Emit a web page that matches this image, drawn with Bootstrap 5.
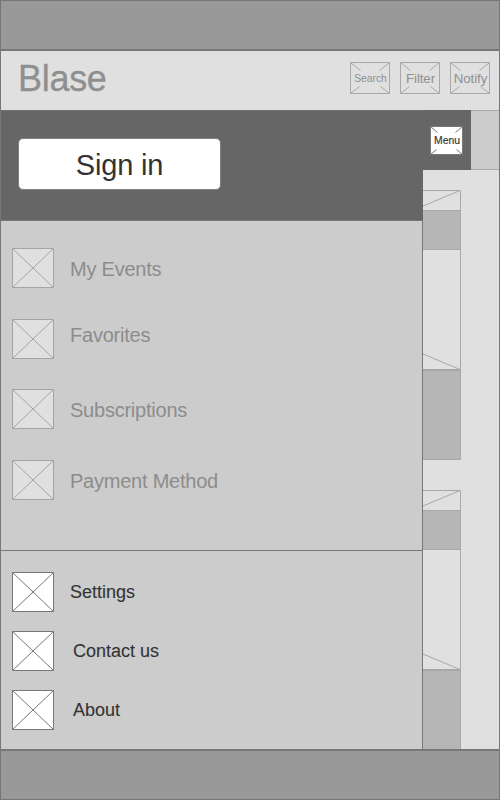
<!DOCTYPE html>
<html lang="en">
<head>
<meta charset="utf-8">
<meta name="viewport" content="width=device-width, initial-scale=1">
<title>Blase</title>
<link href="https://cdn.jsdelivr.net/npm/bootstrap@5.3.0/dist/css/bootstrap.min.css" rel="stylesheet">
<style>
body { font-family: "Liberation Sans", Arial, sans-serif; line-height: 1; color: #333; }
svg { display: block; fill: none; flex: none; }
.screen { width: 500px; height: 800px; background: #e0e0e0; }
.frame { inset: 0; border: 1px solid #777; pointer-events: none; }
.bar-top { height: 51px; background: #999; border-bottom: 2px solid #777; }
.bar-bottom { height: 51px; background: #999; border-top: 2px solid #777; }
.app-head { height: 59px; padding: 0 10px 5px 18px; color: #8f8f8f; }
.brand { font-size: 36px; letter-spacing: -.3px; padding-top: 1px; -webkit-text-stroke: .3px #8f8f8f; }
.tools { gap: 10px; }
.tool { width: 40px; height: 32px; font-size: 13.3px; line-height: 14px; letter-spacing: -.1px; padding-left: 1px; }
.tool.small-label { font-size: 10.3px; letter-spacing: 0; }
.tool svg, .menu-btn svg { inset: 0; }
.tool span { position: relative; white-space: nowrap; top: 1px; }
.drawer { width: 423px; background: #ccc; }
.drawer-head { height: 110px; background: #666; padding: 27px 0 0 18px; border-top: 1px solid #707070; }
.sign-in { width: 203px; height: 52px; background: #fff; border: 1px solid #808080; border-radius: 5px; font-size: 29px; line-height: 1; color: #333; padding: 3px 0 0; letter-spacing: -.2px; }
.drawer-body { border-top: 1px solid #777; border-right: 1px solid #777; padding-left: 12px; }
.guest { height: 330px; padding-top: 27px; color: #8c8c8c; font-size: 20px; letter-spacing: -.23px; border-bottom: 1px solid #777; margin-left: -12px; padding-left: 12px; }
.entry { height: 40px; gap: 16px; margin-bottom: 30px; }
.entry.wide { margin-bottom: 31px; }
.entry span { padding-top: 2px; }
.entry.raised span { padding-top: 0; padding-bottom: 8px; }
.entry svg { background: #e0e0e0; stroke: #a4a4a4; }
.general { padding-top: 21px; font-size: 18px; -webkit-text-stroke: .1px #333; }
.general .entry { margin-bottom: 19px; }
.general .entry span { padding-top: 0; }
.general .entry svg { background: #fff; stroke: #777; }
.general .shifted { gap: 19px; }
.tab-row { height: 60px; }
.tab-cell { width: 48px; background: #666; padding: 16px 0 0 7px; }
.tab-rest { background: #ccc; border-top: 1px solid #aaa; border-bottom: 1px solid #aaa; }
.menu-btn { width: 33px; height: 29px; font-size: 10.4px; }
.menu-btn span { position: relative; top: 1px; left: .5px; -webkit-text-stroke: .15px #333; }
.feed { padding-top: 20px; }
.tile { width: 38px; height: 270px; margin-bottom: 30px; }
</style>
<script src="https://cdn.jsdelivr.net/npm/bootstrap@5.3.0/dist/js/bootstrap.bundle.min.js"></script>
</head>
<body>
<svg width="0" height="0" class="position-absolute">
  <symbol id="cross" viewBox="0 0 42 40"><path d="M.5.5h41v39H.5zM.5.5l41 39M41.5.5L.5 39.5"/></symbol>
  <symbol id="corners" viewBox="0 0 40 32"><path d="M.5.5h39v31H.5zM.5.5l10 8M39.5.5l-10 8M.5 31.5l9-7M39.5 31.5l-9-7"/></symbol>
  <symbol id="tile" viewBox="0 0 38 270">
    <path d="M0 20.5h37v39H0zM0 180h37v89H0z" fill="#b6b6b6" stroke="none"/>
    <path d="M0 .5h37.5v269H0M0 20.5h37M0 59.5h37M0 16L37 .5M0 164l37 15.5"/>
    <path d="M0 180h37" stroke-width="2"/>
  </symbol>
</svg>
<div class="screen position-relative d-flex flex-column overflow-hidden">
  <div class="bar-top flex-shrink-0"></div>
  <header class="app-head d-flex align-items-center justify-content-between flex-shrink-0">
    <div class="brand">Blase</div>
    <div class="tools d-flex">
      <div class="tool small-label position-relative d-flex align-items-center justify-content-center"><svg class="position-absolute" width="40" height="32" stroke="#a8a8a8"><use href="#corners"/></svg><span>Search</span></div>
      <div class="tool position-relative d-flex align-items-center justify-content-center"><svg class="position-absolute" width="40" height="32" stroke="#a8a8a8"><use href="#corners"/></svg><span>Filter</span></div>
      <div class="tool position-relative d-flex align-items-center justify-content-center"><svg class="position-absolute" width="40" height="32" stroke="#a8a8a8"><use href="#corners"/></svg><span>Notify</span></div>
    </div>
  </header>
  <main class="d-flex flex-grow-1 overflow-hidden">
    <aside class="drawer d-flex flex-column flex-shrink-0">
      <div class="drawer-head flex-shrink-0"><button class="sign-in btn">Sign in</button></div>
      <nav class="drawer-body flex-grow-1">
        <div class="guest">
          <div class="entry wide d-flex align-items-center"><svg width="42" height="40"><use href="#cross"/></svg><span>My Events</span></div>
          <div class="entry raised d-flex align-items-center"><svg width="42" height="40"><use href="#cross"/></svg><span>Favorites</span></div>
          <div class="entry wide d-flex align-items-center"><svg width="42" height="40"><use href="#cross"/></svg><span>Subscriptions</span></div>
          <div class="entry d-flex align-items-center"><svg width="42" height="40"><use href="#cross"/></svg><span>Payment Method</span></div>
        </div>
        <div class="general">
          <div class="entry d-flex align-items-center"><svg width="42" height="40"><use href="#cross"/></svg><span>Settings</span></div>
          <div class="entry shifted d-flex align-items-center"><svg width="42" height="40"><use href="#cross"/></svg><span>Contact us</span></div>
          <div class="entry shifted d-flex align-items-center"><svg width="42" height="40"><use href="#cross"/></svg><span>About</span></div>
        </div>
      </nav>
    </aside>
    <section class="flex-grow-1">
      <div class="tab-row d-flex">
        <div class="tab-cell">
          <div class="menu-btn bg-white position-relative d-flex align-items-center justify-content-center"><svg class="position-absolute" width="33" height="29" stroke="#777"><path d="M.5.5h32v28H.5zM.5.5l7 6M32.5.5l-7 6M.5 28.5l6-5M32.5 28.5l-6-5"/></svg><span>Menu</span></div>
        </div>
        <div class="tab-rest flex-grow-1"></div>
      </div>
      <div class="feed">
        <svg class="tile" stroke="#a8a8a8"><use href="#tile"/></svg>
        <svg class="tile" stroke="#a8a8a8"><use href="#tile"/></svg>
      </div>
    </section>
  </main>
  <div class="bar-bottom flex-shrink-0"></div>
  <div class="frame position-absolute"></div>
</div>
</body>
</html>
